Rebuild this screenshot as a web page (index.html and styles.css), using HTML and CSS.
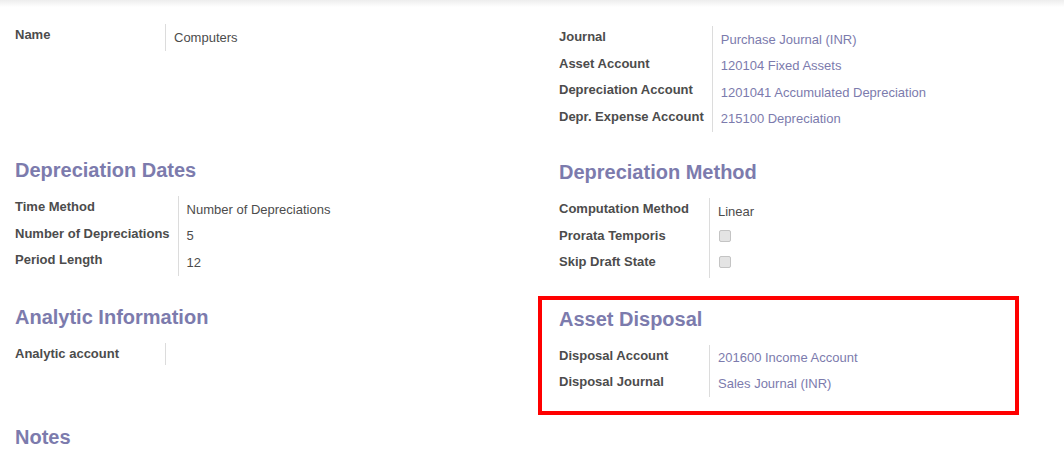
FILE: index.html
```html
<!DOCTYPE html>
<html>
<head>
<meta charset="utf-8">
<title>Asset Category</title>
<link rel="stylesheet" href="styles.css">
</head>
<body>
<div class="topshade"></div>
<main class="sheet">
  <div class="row row-first">
    <section class="col">
      <div class="group">
        <div class="lbl">Name</div><div class="val">Computers</div>
      </div>
    </section>
    <section class="col col-right">
      <div class="group">
        <div class="lbl">Journal</div><div class="val"><a class="link">Purchase Journal (INR)</a></div>
        <div class="lbl">Asset Account</div><div class="val"><a class="link">120104 Fixed Assets</a></div>
        <div class="lbl">Depreciation Account</div><div class="val"><a class="link">1201041 Accumulated Depreciation</a></div>
        <div class="lbl">Depr. Expense Account</div><div class="val"><a class="link">215100 Depreciation</a></div>
      </div>
    </section>
  </div>

  <div class="row row-second">
    <section class="col">
      <h2 class="sep-title">Depreciation Dates</h2>
      <div class="group">
        <div class="lbl">Time Method</div><div class="val">Number of Depreciations</div>
        <div class="lbl">Number of Depreciations</div><div class="val">5</div>
        <div class="lbl">Period Length</div><div class="val">12</div>
      </div>
    </section>
    <section class="col col-right">
      <h2 class="sep-title">Depreciation Method</h2>
      <div class="group">
        <div class="lbl">Computation Method</div><div class="val">Linear</div>
        <div class="lbl">Prorata Temporis</div><div class="val"><span class="checkbox"></span></div>
        <div class="lbl">Skip Draft State</div><div class="val"><span class="checkbox"></span></div>
      </div>
    </section>
  </div>

  <div class="row row-third">
    <section class="col">
      <h2 class="sep-title">Analytic Information</h2>
      <div class="group group-short">
        <div class="lbl">Analytic account</div><div class="val"></div>
      </div>
    </section>
    <section class="col col-right highlight">
      <h2 class="sep-title">Asset Disposal</h2>
      <div class="group group-tight">
        <div class="lbl">Disposal Account</div><div class="val"><a class="link">201600 Income Account</a></div>
        <div class="lbl">Disposal Journal</div><div class="val"><a class="link">Sales Journal (INR)</a></div>
      </div>
    </section>
  </div>

  <div class="row-notes">
    <h2 class="sep-title">Notes</h2>
  </div>
</main>
</body>
</html>
```

FILE: styles.css
```css
html, body {
  margin: 0;
  padding: 0;
  background: #ffffff;
}

body {
  font-family: "Liberation Sans", Arial, Helvetica, sans-serif;
  font-size: 13px;
  color: #4c4c4c;
  overflow: hidden;
}

.topshade {
  height: 7px;
  background: linear-gradient(#ededed, #ffffff);
}

.sheet {
  padding: 17px 15px 0 15px;
}

.row {
  display: grid;
  grid-template-columns: 1fr 1fr;
  column-gap: 54px;
  align-items: start;
}

.row-second {
  margin-top: 27px;
}

.row-third {
  margin-top: 28px;
}

.row-notes {
  margin-top: 29px;
}

.col-right {
  padding-top: 2px;
}

.sep-title {
  margin: 0 0 15px 0;
  font-size: 20px;
  line-height: 22px;
  font-weight: bold;
  color: #7c7bad;
}

.group {
  display: grid;
  grid-template-columns: minmax(150px, max-content) 1fr;
  grid-auto-rows: 26.5px;
}

.group-short {
  grid-auto-rows: 22px;
}

.group-tight {
  grid-auto-rows: 26px;
}

.lbl {
  padding: 2px 8px 0 0;
  line-height: 18px;
  font-weight: bold;
  white-space: nowrap;
  color: #4c4c4c;
}

.val {
  border-left: 1px solid #dcdcdc;
  padding: 4.5px 0 0 8px;
  line-height: 18px;
  white-space: nowrap;
}

.link {
  color: #7c7bad;
  text-decoration: none;
}

.checkbox {
  display: inline-block;
  box-sizing: border-box;
  width: 12px;
  height: 12px;
  margin: 0.5px 0 0 1px;
  vertical-align: top;
  border: 1px solid #c4c4c4;
  border-radius: 2px;
  background: #e4e4e4;
}

.highlight {
  position: relative;
}

.highlight::after {
  content: "";
  position: absolute;
  top: -9.5px;
  left: -21px;
  right: 30px;
  bottom: -18px;
  border: 4px solid #ff0000;
  pointer-events: none;
}
```
